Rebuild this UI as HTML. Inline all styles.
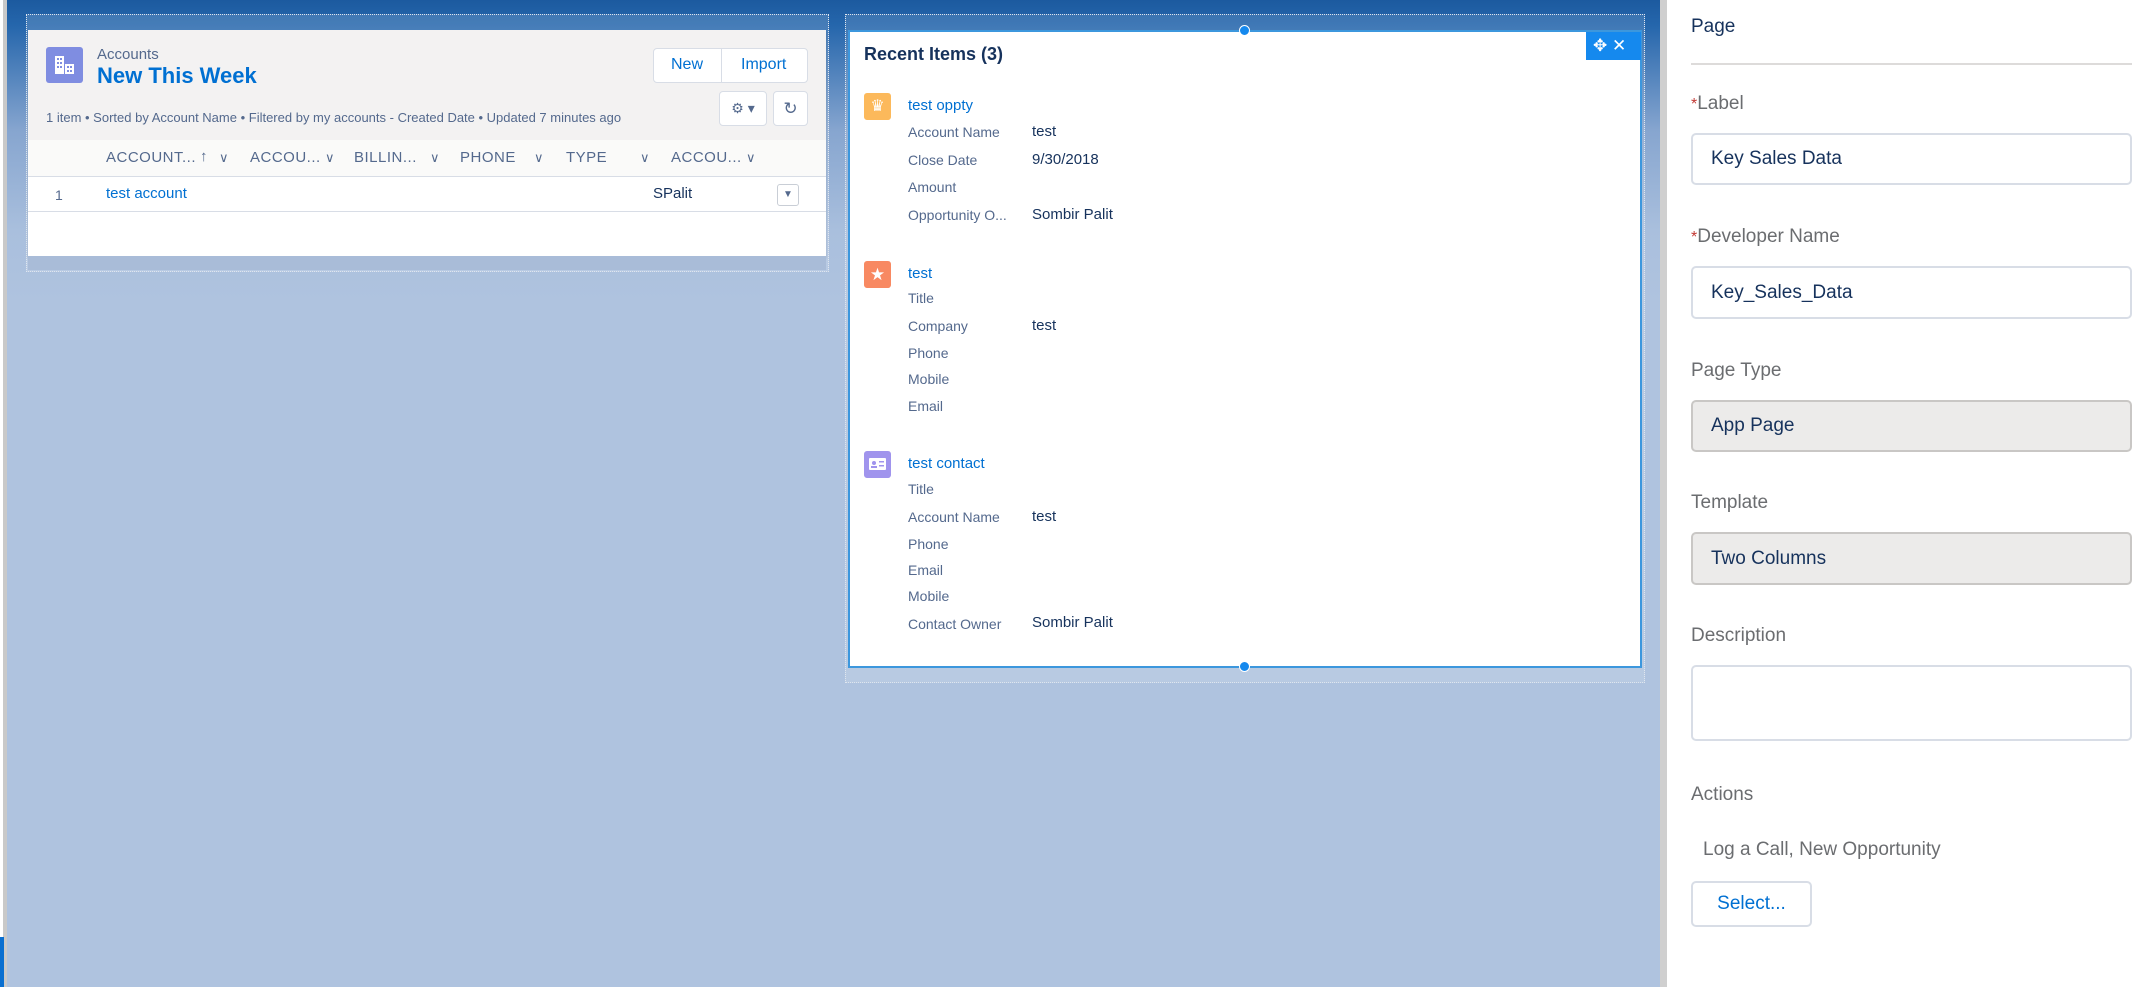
<!DOCTYPE html>
<html><head><meta charset="utf-8"><style>
*{box-sizing:border-box;margin:0;padding:0}
body{width:2154px;height:987px;overflow:hidden;background:#fff;font-family:"Liberation Sans",sans-serif;position:relative}
.a{position:absolute;white-space:nowrap}
#canvas{position:absolute;left:7px;top:0;width:1655px;height:987px;background:linear-gradient(#1c5a9f 0px,#2566ac 25px,#86a5cf 130px,#a9bfdd 230px,#afc3df 300px)}
.lbl{color:#54698d;font-size:14px}
.val{color:#16325c;font-size:15px}
.link{color:#0070d2;font-size:15px}
.hd{color:#54698d;font-size:15px;letter-spacing:.5px}
.chev{color:#54698d;font-size:13px}
.flab{color:#6b6d70;font-size:19px}
.inp{position:absolute;left:1691px;width:441px;border:2px solid #d8dde6;border-radius:5px;background:#fff;color:#16325c;font-size:19px;padding-left:18px;display:flex;align-items:center}
.req{color:#c23934;font-size:16px}
</style></head><body>
<div style="position:absolute;left:3px;top:0;width:4px;height:987px;background:#c9c9c9"></div>
<div style="position:absolute;left:0;top:937px;width:4px;height:50px;background:#0a6fd0"></div>
<div id="canvas"></div>
<div style="position:absolute;left:1660px;top:0;width:7px;height:987px;background:#cfcfcf"></div>

<!-- left card -->
<div style="position:absolute;left:26px;top:14px;width:803px;height:258px;border:1px dotted #dfe6ef;background:rgba(255,255,255,.15)"></div>
<div style="position:absolute;left:28px;top:30px;width:798px;height:226px;background:#fff;box-shadow:0 2px 2px rgba(0,0,0,.15)"></div>
<div style="position:absolute;left:28px;top:30px;width:798px;height:110px;background:#f3f2f2"></div>
<div style="position:absolute;left:28px;top:256px;width:798px;height:14px;background:#a9bcd8"></div>
<div style="position:absolute;left:46px;top:47px;width:37px;height:36px;background:#7f8de1;border-radius:3px"></div>
<svg class="a" style="left:54px;top:55px" width="22" height="20" viewBox="0 0 22 20"><g fill="#fff"><rect x="1" y="1" width="9" height="18"/><rect x="11" y="9" width="9" height="10"/></g><g fill="#7f8de1"><rect x="3" y="3" width="2" height="2"/><rect x="6" y="3" width="2" height="2"/><rect x="3" y="7" width="2" height="2"/><rect x="6" y="7" width="2" height="2"/><rect x="3" y="11" width="2" height="2"/><rect x="6" y="11" width="2" height="2"/><rect x="13" y="11" width="2" height="2"/><rect x="16" y="11" width="2" height="2"/><rect x="13" y="15" width="2" height="2"/><rect x="16" y="15" width="2" height="2"/></g></svg>
<div class="a" style="left:97px;top:46px;font-size:15px;color:#54698d">Accounts</div>
<div class="a" style="left:97px;top:63px;font-size:22px;font-weight:bold;color:#0070d2">New This Week</div>
<div class="a" style="left:653px;top:48px;width:155px;height:35px;border:1px solid #d8dde6;border-radius:4px;background:#fff"></div>
<div class="a" style="left:721px;top:48px;width:1px;height:35px;background:#d8dde6"></div>
<div class="a" style="left:671px;top:56px;font-size:16px;color:#0070d2">New</div>
<div class="a" style="left:741px;top:56px;font-size:16px;color:#0070d2">Import</div>
<div class="a" style="left:719px;top:91px;width:48px;height:35px;border:1px solid #d8dde6;border-radius:4px;background:#fff;font-size:14px;color:#54698d;text-align:center;line-height:33px">⚙ ▾</div>
<div class="a" style="left:773px;top:91px;width:35px;height:35px;border:1px solid #d8dde6;border-radius:4px;background:#fff;font-size:17px;color:#54698d;text-align:center;line-height:33px">↻</div>
<div class="a" style="left:46px;top:110px;font-size:13px;color:#54698d">1 item • Sorted by Account Name • Filtered by my accounts - Created Date • Updated 7 minutes ago</div>
<div style="position:absolute;left:28px;top:140px;width:798px;height:37px;background:#fafaf9;border-bottom:1px solid #d8dde6"></div>
<div class="a hd" style="left:106px;top:149px">ACCOUNT...</div>
<div class="a hd" style="left:200px;top:148px">↑</div>
<div class="a chev" style="left:219px;top:150px">∨</div>
<div class="a hd" style="left:250px;top:149px">ACCOU...</div>
<div class="a chev" style="left:325px;top:150px">∨</div>
<div class="a hd" style="left:354px;top:149px">BILLIN...</div>
<div class="a chev" style="left:430px;top:150px">∨</div>
<div class="a hd" style="left:460px;top:149px">PHONE</div>
<div class="a chev" style="left:534px;top:150px">∨</div>
<div class="a hd" style="left:566px;top:149px">TYPE</div>
<div class="a chev" style="left:640px;top:150px">∨</div>
<div class="a hd" style="left:671px;top:149px">ACCOU...</div>
<div class="a chev" style="left:746px;top:150px">∨</div>
<div style="position:absolute;left:28px;top:211px;width:798px;height:1px;background:#d8dde6"></div>
<div class="a" style="left:55px;top:187px;font-size:14px;color:#54698d">1</div>
<div class="a link" style="left:106px;top:185px;font-size:15px">test account</div>
<div class="a val" style="left:653px;top:185px">SPalit</div>
<div class="a" style="left:777px;top:184px;width:22px;height:22px;border:1px solid #c9ced6;border-radius:3px;font-size:10px;color:#54698d;text-align:center;line-height:20px">▼</div>

<!-- right card -->
<div style="position:absolute;left:845px;top:14px;width:800px;height:669px;border:1px dotted #dfe6ef;background:rgba(255,255,255,.12)"></div>
<div style="position:absolute;left:848px;top:30px;width:794px;height:638px;background:#fff;border:2px solid #3c97dd"></div>
<div style="position:absolute;left:1239px;top:25px;width:11px;height:11px;border-radius:50%;background:#1589ee;border:1px solid #fff"></div>
<div style="position:absolute;left:1239px;top:661px;width:11px;height:11px;border-radius:50%;background:#1589ee;border:1px solid #fff"></div>
<div style="position:absolute;left:1586px;top:32px;width:55px;height:28px;background:#1589ee;color:#fff;font-size:17px;line-height:28px;padding-left:7px">✥ ✕</div>
<div class="a" style="left:864px;top:44px;font-size:18px;font-weight:bold;color:#16325c">Recent Items (3)</div>

<div style="position:absolute;left:864px;top:93px;width:27px;height:27px;background:#fcb95b;border-radius:3px;color:#fff;font-size:16px;text-align:center;line-height:27px">♛</div>
<div class="a link" style="left:908px;top:97px">test oppty</div>
<div class="a lbl" style="left:908px;top:124px">Account Name</div><div class="a val" style="left:1032px;top:123px">test</div>
<div class="a lbl" style="left:908px;top:152px">Close Date</div><div class="a val" style="left:1032px;top:151px">9/30/2018</div>
<div class="a lbl" style="left:908px;top:179px">Amount</div>
<div class="a lbl" style="left:908px;top:207px">Opportunity O...</div><div class="a val" style="left:1032px;top:206px">Sombir Palit</div>

<div style="position:absolute;left:864px;top:261px;width:27px;height:27px;background:#f88962;border-radius:3px;color:#fff;font-size:17px;text-align:center;line-height:27px">★</div>
<div class="a link" style="left:908px;top:265px">test</div>
<div class="a lbl" style="left:908px;top:290px">Title</div>
<div class="a lbl" style="left:908px;top:318px">Company</div><div class="a val" style="left:1032px;top:317px">test</div>
<div class="a lbl" style="left:908px;top:345px">Phone</div>
<div class="a lbl" style="left:908px;top:371px">Mobile</div>
<div class="a lbl" style="left:908px;top:398px">Email</div>

<div style="position:absolute;left:864px;top:451px;width:27px;height:27px;background:#a094ed;border-radius:3px"></div>
<svg class="a" style="left:869px;top:458px" width="17" height="12" viewBox="0 0 17 12"><rect x="0" y="0" width="17" height="12" rx="1" fill="#fff"/><circle cx="5" cy="5" r="2" fill="#a094ed"/><rect x="2" y="8" width="6" height="2" fill="#a094ed"/><rect x="10" y="3" width="5" height="1.5" fill="#a094ed"/><rect x="10" y="7" width="5" height="1.5" fill="#a094ed"/></svg>
<div class="a link" style="left:908px;top:455px">test contact</div>
<div class="a lbl" style="left:908px;top:481px">Title</div>
<div class="a lbl" style="left:908px;top:509px">Account Name</div><div class="a val" style="left:1032px;top:508px">test</div>
<div class="a lbl" style="left:908px;top:536px">Phone</div>
<div class="a lbl" style="left:908px;top:562px">Email</div>
<div class="a lbl" style="left:908px;top:588px">Mobile</div>
<div class="a lbl" style="left:908px;top:616px">Contact Owner</div><div class="a val" style="left:1032px;top:614px">Sombir Palit</div>

<!-- right panel -->
<div class="a" style="left:1691px;top:16px;font-size:19px;color:#16325c">Page</div>
<div style="position:absolute;left:1691px;top:63px;width:441px;height:2px;background:#dddbda"></div>
<div class="a flab" style="left:1691px;top:93px"><span class="req">*</span>Label</div>
<div class="inp" style="top:133px;height:52px">Key Sales Data</div>
<div class="a flab" style="left:1691px;top:226px"><span class="req">*</span>Developer Name</div>
<div class="inp" style="top:266px;height:53px">Key_Sales_Data</div>
<div class="a flab" style="left:1691px;top:360px">Page Type</div>
<div class="inp" style="top:400px;height:52px;background:#ecebea;border-color:#c9c7c5">App Page</div>
<div class="a flab" style="left:1691px;top:492px">Template</div>
<div class="inp" style="top:532px;height:53px;background:#ecebea;border-color:#c9c7c5">Two Columns</div>
<div class="a flab" style="left:1691px;top:625px">Description</div>
<div class="inp" style="top:665px;height:76px"></div>
<div class="a flab" style="left:1691px;top:784px">Actions</div>
<div class="a" style="left:1703px;top:839px;font-size:19px;color:#6b6d70">Log a Call, New Opportunity</div>
<div class="a" style="left:1691px;top:881px;width:121px;height:46px;border:2px solid #d8dde6;border-radius:5px;background:#fff;color:#0070d2;font-size:19px;text-align:center;line-height:42px">Select...</div>
</body></html>
